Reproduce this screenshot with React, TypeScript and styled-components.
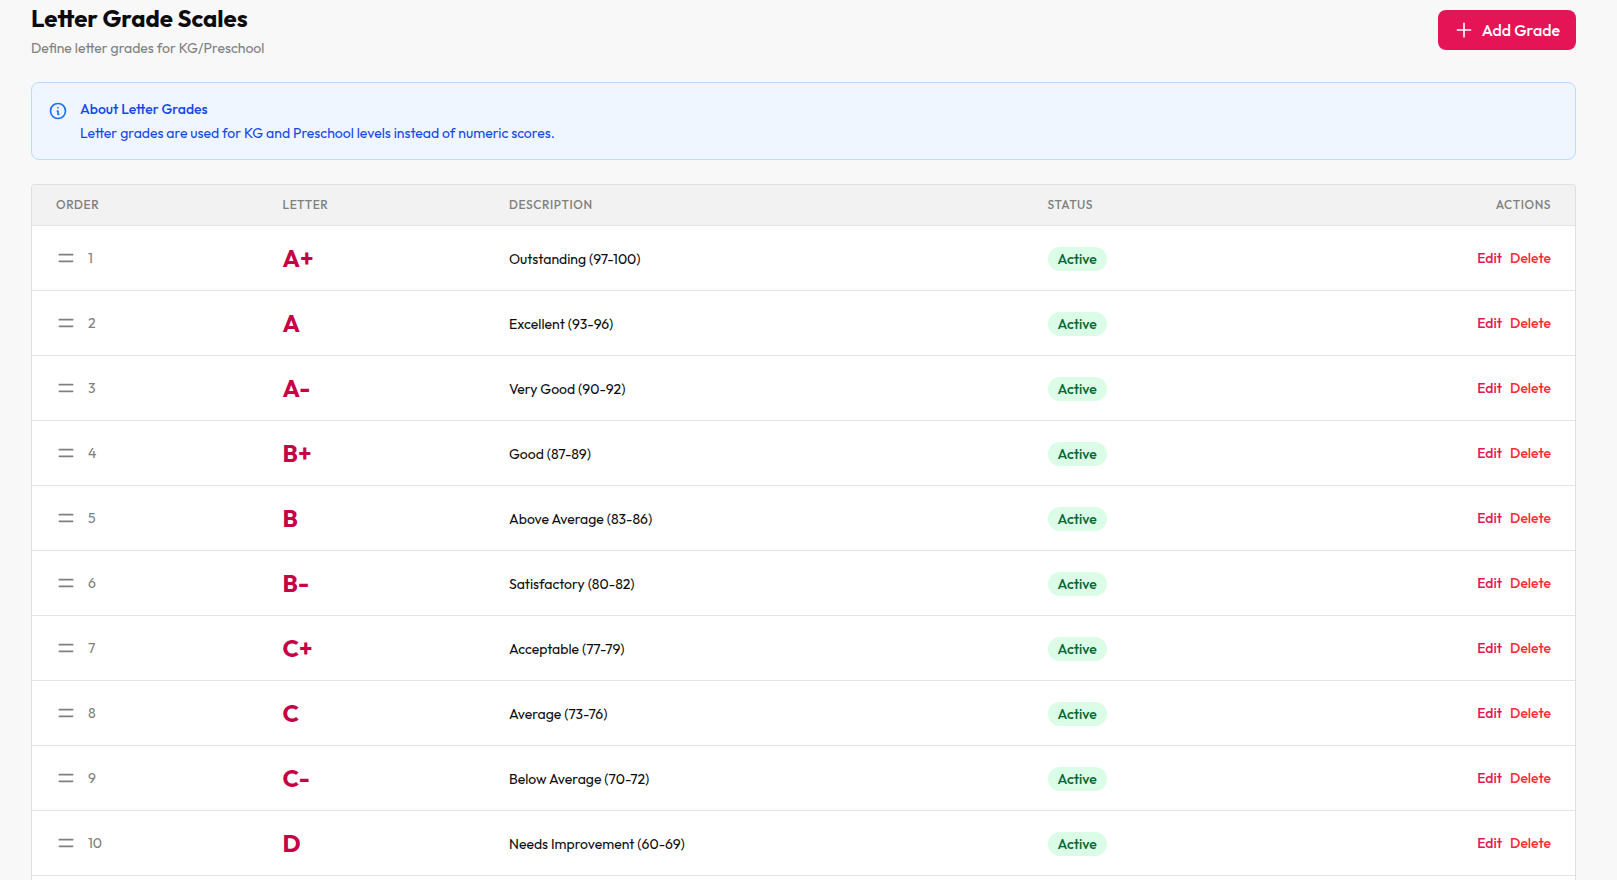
import React from "react";
import styled, { createGlobalStyle, css } from "styled-components";

const GlobalStyle = createGlobalStyle`
  *, *::before, *::after { box-sizing: border-box; }
  body {
    margin: 0;
    background: #f8f8f8;
    color: #0c0c0e;
    font-family: Outfit, Lato, sans-serif;
    font-size: 14px;
    line-height: 20px;
  }
  h1, h2, p { margin: 0; }
  button { font: inherit; border: 0; cursor: pointer; }
`;

const Page = styled.main`
  display: flex;
  flex-direction: column;
  gap: 24px;
  height: 100vh;
  overflow: hidden;
  padding: 2px 41px 0 31px;
`;

const Header = styled.header`
  display: flex;
  flex: none;
  align-items: center;
  justify-content: space-between;
`;

const Title = styled.h1`
  font-size: 24px;
  font-weight: 700;
  line-height: 32px;
`;

const Subtitle = styled.p`
  margin-top: 4px;
  color: #808080;
`;

const AddButton = styled.button`
  display: flex;
  align-items: center;
  gap: 8px;
  height: 40px;
  padding: 0 16px;
  border-radius: 8px;
  background: #e41456;
  color: #fff;
  font-size: 16px;
  font-weight: 500;
`;

const Icon = styled.svg.attrs({
  viewBox: "0 0 24 24",
  fill: "none",
  stroke: "currentColor",
  strokeWidth: 2,
  strokeLinecap: "round",
  strokeLinejoin: "round",
  "aria-hidden": true,
})`
  flex: none;
  width: 20px;
  height: 20px;
`;

const Notice = styled.section`
  display: flex;
  flex: none;
  gap: 12px;
  padding: 16px;
  border: 1px solid #b8dbff;
  border-radius: 8px;
  background: #eff6ff;
  color: #1447e6;

  ${Icon} {
    margin-top: 2px;
    color: #2070ff;
  }
`;

const NoticeTitle = styled.h2`
  margin-bottom: 4px;
  font-size: 14px;
  font-weight: 500;
`;

const Card = styled.div`
  flex: 1 0 auto;
  overflow: hidden;
  border: 1px solid #e0e0e0;
  border-bottom: 0;
  border-radius: 4px 4px 0 0;
  background: #fff;
`;

const Table = styled.table`
  width: 100%;
  table-layout: fixed;
  border-collapse: separate;
  border-spacing: 0;
`;

const alignment = css<{ $end?: boolean }>`
  text-align: ${(p) => (p.$end ? "right" : "left")};
`;

const HeadCell = styled.th<{ $width?: string; $end?: boolean }>`
  ${alignment}
  width: ${(p) => p.$width ?? "auto"};
  height: 41px;
  padding: 0 24px;
  border-bottom: 1px solid #e4e4e4;
  background: #f2f2f2;
  color: #808080;
  font-size: 12px;
  font-weight: 500;
  letter-spacing: 0.05em;
  line-height: 16px;
  text-transform: uppercase;
`;

const Cell = styled.td<{ $end?: boolean }>`
  ${alignment}
  height: 65px;
  padding: 0 24px;
  border-bottom: 1px solid #e4e4e4;
  font-size: 16px;
  line-height: 24px;
  vertical-align: middle;
`;

const Order = styled.div`
  display: flex;
  align-items: center;
  gap: 12px;
  color: #808080;
  font-size: 14px;
  line-height: 20px;
`;

const Letter = styled.div`
  color: #c70046;
  font-size: 24px;
  font-weight: 700;
  line-height: 32px;
`;

const Description = styled.span`
  font-size: 14px;
`;

const Badge = styled.span`
  display: inline-flex;
  align-items: center;
  height: 24px;
  padding: 0 10px;
  border-radius: 12px;
  background: #dbfce7;
  color: #016630;
  font-size: 14px;
  font-weight: 500;
  line-height: 20px;
`;

const Actions = styled.div`
  display: flex;
  justify-content: flex-end;
  gap: 8px;
  font-size: 14px;
  line-height: 20px;
`;

const ActionButton = styled.button<{ $danger?: boolean }>`
  padding: 0;
  background: none;
  color: ${(p) => (p.$danger ? "#fb2c36" : "#e41456")};
  font-weight: 500;
`;

const grades = [
  { letter: "A+", description: "Outstanding (97-100)" },
  { letter: "A", description: "Excellent (93-96)" },
  { letter: "A-", description: "Very Good (90-92)" },
  { letter: "B+", description: "Good (87-89)" },
  { letter: "B", description: "Above Average (83-86)" },
  { letter: "B-", description: "Satisfactory (80-82)" },
  { letter: "C+", description: "Acceptable (77-79)" },
  { letter: "C", description: "Average (73-76)" },
  { letter: "C-", description: "Below Average (70-72)" },
  { letter: "D", description: "Needs Improvement (60-69)" },
];

export default function App() {
  return (
    <>
      <GlobalStyle />
      <Page>
        <Header>
          <div>
            <Title>Letter Grade Scales</Title>
            <Subtitle>Define letter grades for KG/Preschool</Subtitle>
          </div>
          <AddButton type="button">
            <Icon>
              <path d="M12 4v16m8-8H4" />
            </Icon>
            Add Grade
          </AddButton>
        </Header>
        <Notice>
          <Icon>
            <path d="M13 16h-1v-4h-1m1-4h.01M21 12a9 9 0 11-18 0 9 9 0 0118 0z" />
          </Icon>
          <div>
            <NoticeTitle>About Letter Grades</NoticeTitle>
            <p>Letter grades are used for KG and Preschool levels instead of numeric scores.</p>
          </div>
        </Notice>
        <Card>
          <Table>
            <thead>
              <tr>
                <HeadCell $width="14.68%">Order</HeadCell>
                <HeadCell $width="14.68%">Letter</HeadCell>
                <HeadCell $width="34.9%">Description</HeadCell>
                <HeadCell>Status</HeadCell>
                <HeadCell $end>Actions</HeadCell>
              </tr>
            </thead>
            <tbody>
              {grades.map((grade, index) => (
                <tr key={grade.letter}>
                  <Cell>
                    <Order>
                      <Icon>
                        <path d="M4 8h16M4 16h16" />
                      </Icon>
                      {index + 1}
                    </Order>
                  </Cell>
                  <Cell>
                    <Letter>{grade.letter}</Letter>
                  </Cell>
                  <Cell>
                    <Description>{grade.description}</Description>
                  </Cell>
                  <Cell>
                    <Badge>Active</Badge>
                  </Cell>
                  <Cell $end>
                    <Actions>
                      <ActionButton type="button">Edit</ActionButton>
                      <ActionButton type="button" $danger>
                        Delete
                      </ActionButton>
                    </Actions>
                  </Cell>
                </tr>
              ))}
            </tbody>
          </Table>
        </Card>
      </Page>
    </>
  );
}
